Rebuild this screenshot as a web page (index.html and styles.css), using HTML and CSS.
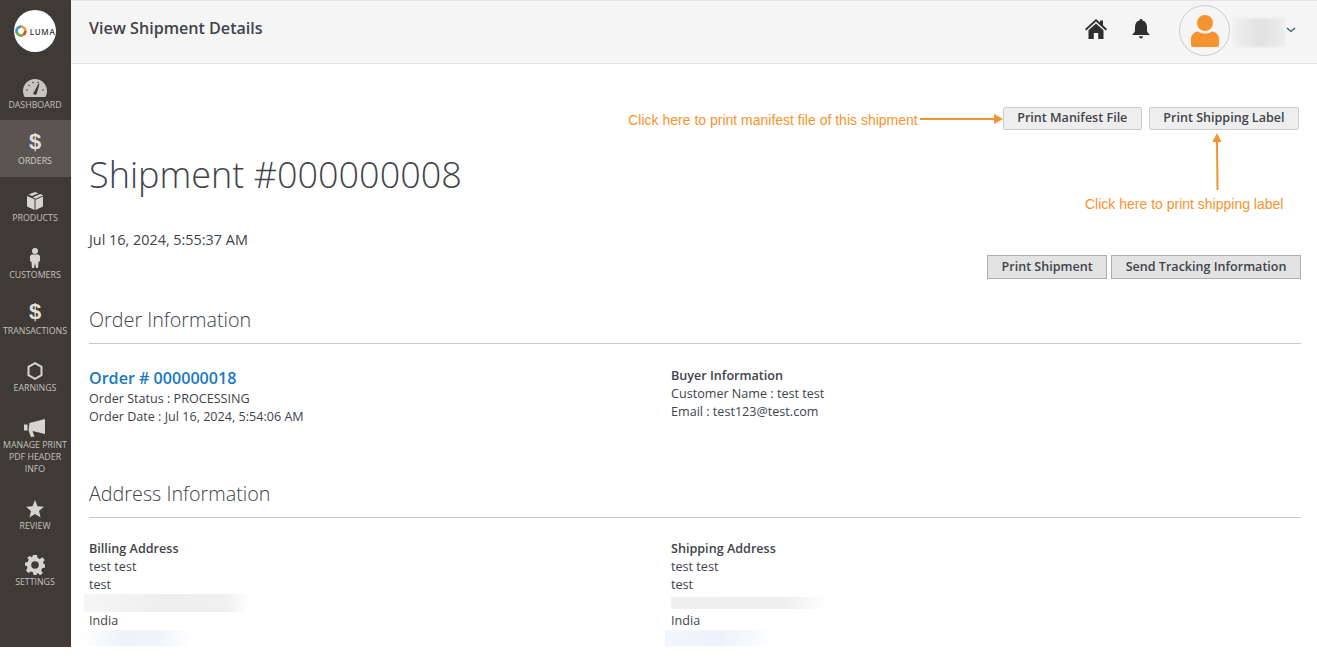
FILE: index.html
```html
<!DOCTYPE html>
<html lang="en">
<head>
<meta charset="utf-8">
<title>View Shipment Details</title>
<link rel="stylesheet" href="styles.css">
</head>
<body>
<div class="app">
  <nav class="sidebar">
    <div class="logo-wrap">
      <div class="logo">
        <svg class="logo-mark" viewBox="0 0 12 12" width="12" height="12"><circle cx="6" cy="6" r="4.4" fill="none" stroke="#f0a030" stroke-width="2.6"/><path d="M6 1.6A4.4 4.4 0 0 0 2 8" fill="none" stroke="#3d9ad0" stroke-width="2.6"/><path d="M2 8A4.4 4.4 0 0 0 8 10" fill="none" stroke="#6cb33f" stroke-width="2.6"/><path d="M8.5 9.6A4.4 4.4 0 0 0 10.4 6" fill="none" stroke="#d9453a" stroke-width="2.6"/></svg>
        <span class="logo-text">LUMA</span>
      </div>
    </div>
    <a class="nav-item">
      <svg class="nav-icon" viewBox="0 0 24 18" width="24" height="18"><path fill="#c8c5c1" fill-rule="evenodd" d="M12 0C5.4 0 0 5.4 0 12c0 2.2.6 4.2 1.6 6h20.8c1-1.800 1.600-3.800 1.600-6C24 5.400 18.600 0 12 0zM11 13l4.500-8.500 1 .5L14 14c-.2 1.200-1.200 2-2.300 1.800-1.100-.2-1.700-1.300-1.500-2.200z"/><g fill="#3f3a36"><circle cx="4" cy="11" r=".8"/><circle cx="6" cy="6.500" r=".8"/><circle cx="10" cy="3.500" r=".8"/><circle cx="15" cy="3.500" r=".8"/><circle cx="20" cy="11" r=".8"/></g></svg>
      <span>Dashboard</span>
    </a>
    <a class="nav-item active">
      <span class="dollar">$</span>
      <span>Orders</span>
    </a>
    <a class="nav-item">
      <svg class="nav-icon" viewBox="0 0 18 18" width="18" height="18"><path fill="#d6d4d1" d="M9 0l3.400 1.300L6 4 2.500 2.600zM14.200 2l3.300 1.300L9.500 6.700 6.800 5.300zM1 4l7.500 3.300V18L1 14.500zM17 4.600v9.900L9.500 18V7.800z"/></svg>
      <span>Products</span>
    </a>
    <a class="nav-item">
      <svg class="nav-icon" viewBox="0 0 12 20" width="12" height="20"><circle cx="6" cy="3" r="3" fill="#d6d4d1"/><path fill="#d6d4d1" d="M2.500 6.500h7l1.500 1.500v5l-1.500 1-.5 6H7l-1-5-1 5H3l-.5-6L1 13V8z"/></svg>
      <span>Customers</span>
    </a>
    <a class="nav-item">
      <span class="dollar">$</span>
      <span>Transactions</span>
    </a>
    <a class="nav-item">
      <svg class="nav-icon" viewBox="0 0 16 18" width="16" height="18"><path fill="none" stroke="#d6d4d1" stroke-width="2" d="M8 1.200l6.500 3.700v8.200L8 16.800l-6.500-3.700V4.900z"/></svg>
      <span>Earnings</span>
    </a>
    <a class="nav-item tall">
      <svg class="nav-icon" viewBox="0 0 22 18" width="22" height="18"><path fill="#d6d4d1" d="M21 0v15L8.500 12l2 5.500-3.500.5-2.500-6.500L5.500 4zM3.500 5.500v6H0v-6z"/></svg>
      <span>Manage Print<br>PDF Header<br>Info</span>
    </a>
    <a class="nav-item">
      <svg class="nav-icon" viewBox="0 0 18 18" width="18" height="18"><path fill="#d6d4d1" d="M9 0l2.500 6.200 6.500.5-5 4.200 1.600 6.600L9 14l-5.600 3.500L5 10.900 0 6.700l6.500-.5z"/></svg>
      <span>Review</span>
    </a>
    <a class="nav-item">
      <svg class="nav-icon" viewBox="0 0 20 20" width="20" height="20"><path fill="#d6d4d1" fill-rule="evenodd" d="M8 0h4l.6 3 2.200.9 2.600-1.700 2.400 2.800L18 7l.7 2 1.300.6v3l-2.900.6-.9 2.200 1.700 2.600-2.800 2.400L13 18.100l-1 .5-.600 1.400H8.600L8 17.300l-2.100-.9L3.300 18 .9 15.300 2.500 13 1.800 11 0 10.500v-3l2.800-.5.900-2.200L2.200 2.400 5 .9 7 2.500z"/><circle cx="10" cy="10" r="3.800" fill="#3f3a36"/></svg>
      <span>Settings</span>
    </a>
  </nav>

  <div class="main">
    <header class="topbar">
      <h1 class="page-title">View Shipment Details</h1>
      <div class="top-actions">
        <svg class="home-icon" viewBox="0 0 22 20" width="22" height="20"><path fill="#2f2f30" d="M11 0l4 3.600V1.500h3v4.800l4 3.600-1.300 1.500L11 2.600 1.300 11.400 0 9.900z"/><path fill="#2f2f30" d="M11 4.500l7.500 6.700V20h-5.300v-6H8.800v6H3.500v-8.800z"/></svg>
        <svg class="bell-icon" viewBox="0 0 18 20" width="18" height="20"><path fill="#2f2f30" d="M9 0c1 0 1.500.6 1.500 1.400C13.500 2.100 15 4.600 15 8v3.500c0 1.500 1.200 2.700 2.500 3.700V16H.5v-.8c1.300-1 2.500-2.200 2.500-3.700V8c0-3.400 1.500-5.900 4.500-6.600C7.500.6 8 0 9 0zM7 17.300h4c0 1.200-.8 2.200-2 2.200s-2-1-2-2.200z"/></svg>
        <div class="avatar">
          <svg viewBox="0 0 28 32" width="28" height="32"><circle cx="14" cy="8" r="8" fill="#f7932e"/><path fill="#f7932e" d="M7 16.500c2 1.400 4.300 2 7 2s5-.6 7-2c4 .5 7 3.400 7 7.500v6c0 1.200-.8 2-2 2H2c-1.200 0-2-.8-2-2v-6c0-4.100 3-7 7-7.500z"/></svg>
        </div>
        <div class="blur-name"></div>
        <svg class="chev" viewBox="0 0 10 6" width="10" height="6"><path fill="none" stroke="#41536b" stroke-width="1.300" d="M1 1l4 3.500L9 1"/></svg>
      </div>
    </header>

    <div class="content">
      <div class="print-row">
        <span class="note">Click here to print manifest file of this shipment</span>
        <svg class="arrow-right" viewBox="0 0 84 10" width="83" height="10" preserveAspectRatio="none"><path fill="#f7932e" d="M0 4h75V0l9 5-9 5V6H0z"/></svg>
        <button class="btn rounded manifest">Print Manifest File</button>
        <button class="btn rounded label">Print Shipping Label</button>
      </div>
      <div class="label-note">
        <svg class="arrow-up" viewBox="0 0 10 57" width="10" height="57"><path fill="#f7932e" d="M5 0l4.500 9H6l.5 48h-2L4 9H.5z"/></svg>
        <span class="note">Click here to print shipping label</span>
      </div>

      <h2 class="shipment">Shipment #000000008</h2>
      <p class="date">Jul 16, 2024, 5:55:37 AM</p>

      <div class="action-row">
        <button class="btn">Print Shipment</button>
        <button class="btn">Send Tracking Information</button>
      </div>

      <section class="section order-section">
        <h3 class="section-title">Order Information</h3>
        <div class="columns">
          <div class="col">
            <a class="order-link">Order # 000000018</a>
            <div>Order Status : PROCESSING</div>
            <div>Order Date : Jul 16, 2024, 5:54:06 AM</div>
          </div>
          <div class="col">
            <div class="strong">Buyer Information</div>
            <div>Customer Name : test test</div>
            <div>Email : test123@test.com</div>
          </div>
        </div>
      </section>

      <section class="section address-section">
        <h3 class="section-title">Address Information</h3>
        <div class="columns">
          <div class="col">
            <div class="strong">Billing Address</div>
            <div>test test</div>
            <div>test</div>
            <div class="blur-line billing"></div>
            <div>India</div>
            <div class="blur-blue billing"></div>
          </div>
          <div class="col">
            <div class="strong">Shipping Address</div>
            <div>test test</div>
            <div>test</div>
            <div class="blur-line shipping"></div>
            <div>India</div>
            <div class="blur-blue shipping"></div>
          </div>
        </div>
      </section>
    </div>
  </div>
</div>
</body>
</html>
```
FILE: styles.css
```css
* { box-sizing: border-box; }
html, body { margin: 0; padding: 0; background: #fff; }
body {
  font-family: "Open Sans", sans-serif;
  color: #41434a;
  font-size: 12.6px;
  overflow: hidden;
}
.app { display: flex; align-items: flex-start; width: 1317px; height: 660px; }

.sidebar {
  width: 71px;
  height: 647px;
  flex: none;
  background: #3f3a36;
  display: flex;
  flex-direction: column;
  overflow: hidden;
}
.logo-wrap { height: 63.5px; flex: none; display: flex; justify-content: center; align-items: flex-start; padding: 10px 1px 0 0; }
.logo {
  width: 42px; height: 42px; border-radius: 50%; background: #fff;
  display: flex; align-items: center; justify-content: center; gap: 3px;
}
.logo-mark { flex: none; }
.logo-text { font-size: 8px; font-weight: 600; letter-spacing: .7px; color: #3a3a3a; }
.nav-item {
  height: 56.7px;
  flex: none;
  display: flex;
  flex-direction: column;
  align-items: center;
  justify-content: flex-start;
  color: #c4c1bd;
  font-size: 8.8px;
  line-height: 12px;
  text-transform: uppercase;
  text-align: center;
  padding: 14px 1px 0 0;
}
.nav-item span { display: block; }
.nav-item.tall { height: 81px; }
.nav-item.active { background: #5a5550; color: #d0cdc9; }
.nav-icon { height: 20px; flex: none; margin-bottom: 1px; }
.nav-item .dollar {
  font-family: "Liberation Sans", sans-serif;
  font-size: 22px; line-height: 20px; height: 20px; margin-bottom: 1px; font-weight: 700; color: #e4e2df;
  text-transform: none; position: relative; top: -2px;
}

.main { flex: 1; min-width: 0; }
.topbar {
  height: 64px;
  background: #f5f5f5;
  border-top: 1px solid #e6e6e6;
  border-bottom: 1px solid #e3e3e3;
  display: flex;
  align-items: flex-start;
  justify-content: space-between;
  padding: 0 21px 0 18px;
}
.page-title { margin: 16px 0 0; font-size: 16.1px; line-height: 22px; font-weight: 600; color: #41434a; }
.top-actions { display: flex; align-items: flex-start; }
.home-icon { margin: 18px 0 0; }
.bell-icon { margin: 18px 0 0 25px; }
.avatar {
  width: 51px; height: 51px; margin: 4px 0 0 29px; border-radius: 50%;
  background: #f5f5f5; border: 1px solid #cfcbc7;
  display: flex; align-items: center; justify-content: center;
}
.blur-name {
  width: 52px; height: 29px; margin: 17px 0 0 3px;
  background: linear-gradient(90deg, #f0f0f0, #e2e2e2 50%, #ececec);
  filter: blur(1px);
}
.chev { margin: 26px 0 0 1px; }

.content { position: relative; padding: 43px 16px 0 18px; height: 583px; overflow: hidden; }

.print-row { display: flex; align-items: flex-start; justify-content: flex-end; padding-right: 2px; height: 23px; }
.note { font-family: "Liberation Sans", sans-serif; font-size: 14px; line-height: 18px; color: #f7932e; }
.print-row .note { margin-top: 4px; }
.arrow-right { margin: 7px 0 0 2px; flex: none; }
.btn {
  font-family: "Open Sans", sans-serif;
  font-size: 12.55px;
  font-weight: 600;
  height: 24px;
  padding: 0 13.5px;
  color: #41434a;
  background: #e3e3e3;
  border: 1px solid #adadad;
  line-height: 20px;
  white-space: nowrap;
}
.btn.rounded { background: #eee; border-color: #ccc; border-radius: 2px; height: 23px; padding-bottom: 2px; }
.btn.manifest { margin-right: 7px; }

.label-note { position: absolute; top: 69px; right: 34px; width: 198px; height: 90px; }
.arrow-up { position: absolute; top: 0; left: 127px; }
.label-note .note { position: absolute; left: 0; bottom: 10px; white-space: nowrap; }

.shipment {
  margin: 20px 0 0; font-size: 36px; line-height: 50px; font-weight: 300; color: #41434a;
}
.date { margin: 31px 0 0; font-size: 14.4px; line-height: 18px; }

.action-row { display: flex; justify-content: flex-end; gap: 4px; margin-top: 6px; }

.section-title {
  margin: 0; font-size: 19.75px; line-height: 27px; font-weight: 300; color: #41434a;
  padding-bottom: 10px; border-bottom: 1px solid #c9c9c9;
}
.order-section { margin-top: 27px; }
.address-section { margin-top: 0; }
.columns { display: flex; }
.col { width: 582px; flex: none; line-height: 18px; }
.order-section .columns { height: 136px; padding-top: 23px; }
.address-section .columns { padding-top: 22px; }
.strong { font-weight: 600; }
.order-link { display: block; color: #1979c3; font-size: 16.1px; font-weight: 600; line-height: 23px; }

.blur-line { height: 18px; }
.blur-line.billing { width: 166px; margin-left: -5px; background: linear-gradient(90deg, #f6f6f6, #eeeeee 50%, #f0f0f0 85%, #fff); }
.blur-line.shipping { width: 157px; height: 12px; margin: 3px 0; background: linear-gradient(90deg, #efefef, #eeeeee 70%, #fff); }
.blur-blue { height: 16px; }
.blur-blue.billing { width: 113px; margin-left: -10px; background: linear-gradient(90deg, #fff, #eef3fa 40%, #f0f4fb 70%, #fff); }
.blur-blue.shipping { width: 110px; margin-left: -6px; background: linear-gradient(90deg, #f2f6fc, #edf2fa 50%, #fff); }
```
